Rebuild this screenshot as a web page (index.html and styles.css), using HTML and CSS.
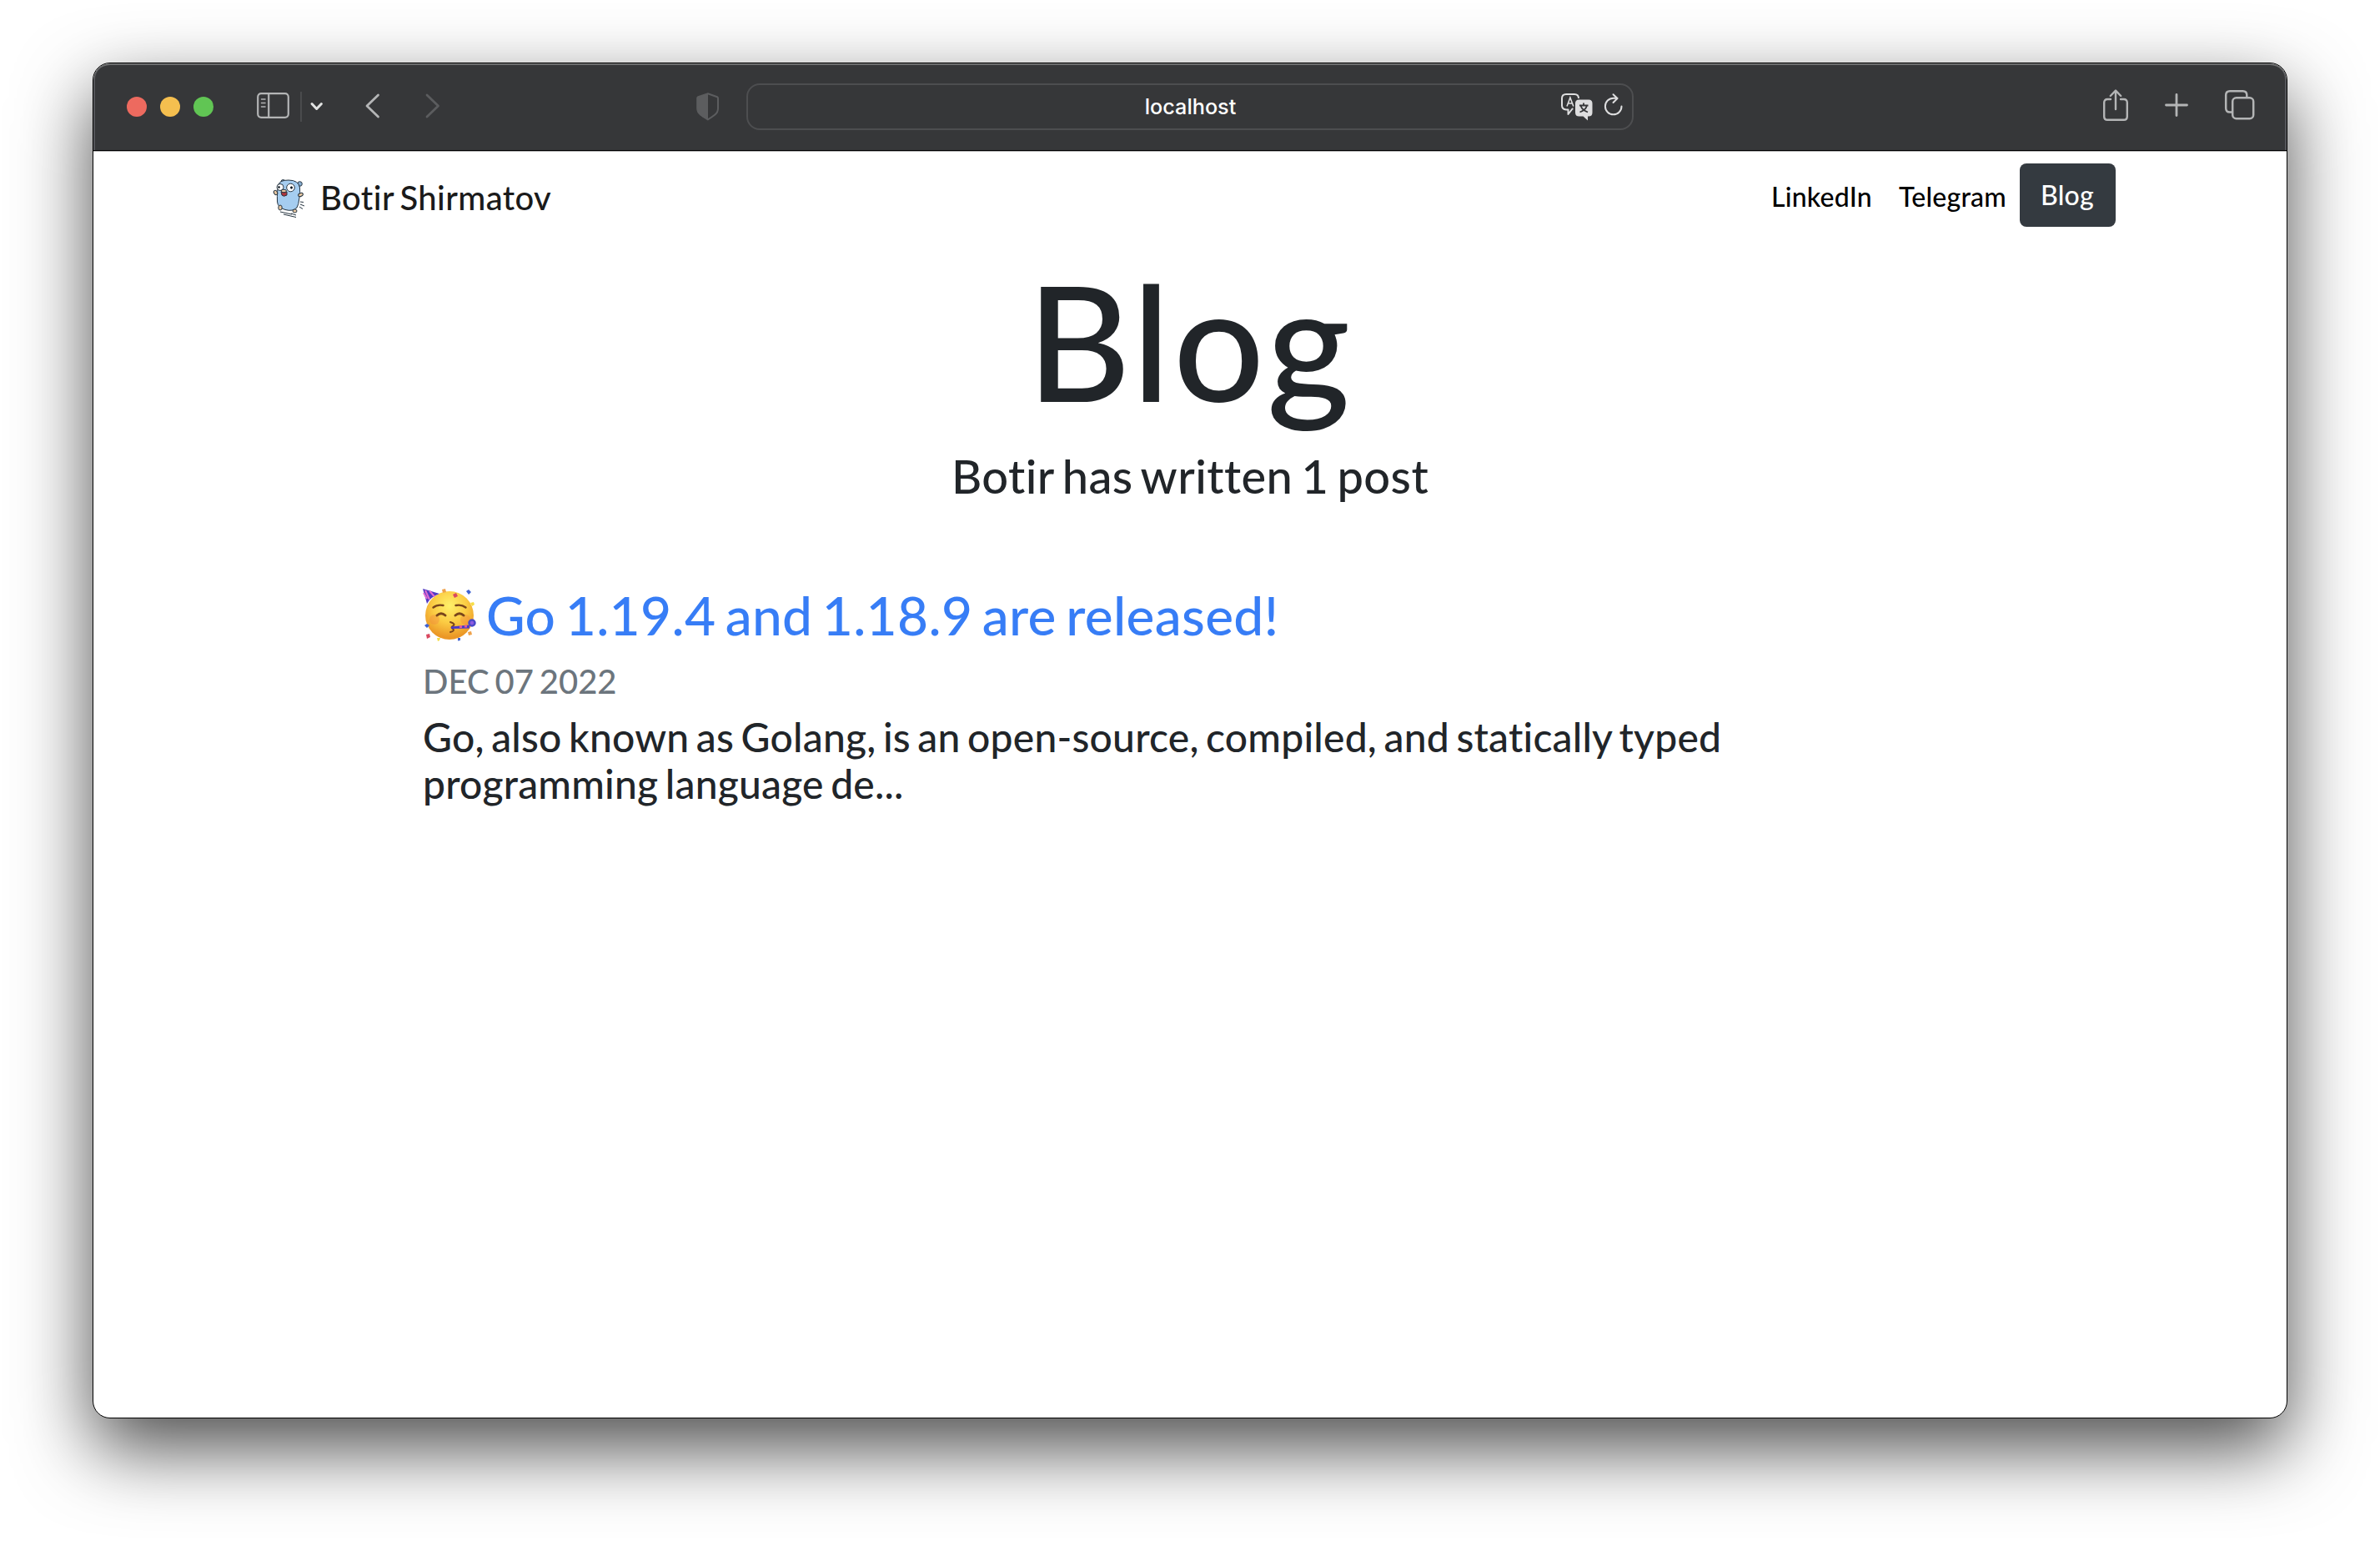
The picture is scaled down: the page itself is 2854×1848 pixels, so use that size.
FILE: index.html
```html
<!DOCTYPE html>
<html lang="en">
<head>
<meta charset="utf-8">
<title>Blog</title>
<link rel="stylesheet" href="styles.css">
</head>
<body>
<div class="window">
  <header class="toolbar">
    <div class="lights"><span class="light red"></span><span class="light yellow"></span><span class="light green"></span></div>
    <svg class="sidebar-icon" width="40" height="32" viewBox="0 0 40 32" fill="none" stroke="#b4b5b6" stroke-width="2.2"><rect x="1.2" y="1.2" width="36.6" height="28.6" rx="4"/><path d="M14.2 1v29"/><path d="M5.500 8h4.500M5.500 12.500h4.500M5.500 17h4.500" stroke-width="1.500" stroke-linecap="round"/></svg>
    <span class="divider"></span>
    <svg class="chevron" width="16" height="12" viewBox="0 0 16 12" fill="none" stroke="#e2e3e3" stroke-width="3" stroke-linecap="round" stroke-linejoin="round"><path d="M2 2.500l5.700 6 5.700-6"/></svg>
    <svg class="back" width="18" height="30" viewBox="0 0 18 30" fill="none" stroke="#b4b5b6" stroke-width="2.800" stroke-linecap="round" stroke-linejoin="round"><path d="M15.500 2L2 15l13.500 13"/></svg>
    <svg class="forward" width="18" height="30" viewBox="0 0 18 30" fill="none" stroke="#5b5c5e" stroke-width="2.800" stroke-linecap="round" stroke-linejoin="round"><path d="M2 2l13.500 13L2 28"/></svg>
    <svg class="shield" width="28" height="34" viewBox="0 0 28 34"><path d="M13.800 1.200L25 5.200q1 .400 1 1.600V19q0 4.500-3.600 7.600-3.600 3-8.600 5.700-5-2.700-8.600-5.700Q1.200 23.500 1.200 19V6.800q0-1.200 1-1.600z" fill="none" stroke="#5c5d5f" stroke-width="2"/><path d="M14 1L1 5.700V19q0 9 13 13.500z" fill="#5c5d5f"/></svg>
    <div class="address">
      <span class="host">localhost</span>
      <div class="address-tools">
        <svg width="38" height="29" viewBox="0 0 38 29"><path d="M14.500 18.500h-1L8.500 25v-5.500H6q-5-.500-5-5V6q0-5 5-5h10q5 0 5 5" fill="none" stroke="#dededf" stroke-width="2" stroke-linejoin="round"/><path d="M7 15.500L10.900 5l3.900 10.500M8.400 12h5" fill="none" stroke="#dededf" stroke-width="1.600"/><path d="M21.500 7.500H33q4.500 0 4.500 4.500v11q0 4.500-4.500 4.500h-1V32.500l-5.500-5h-5Q17 27.500 17 23v-11q0-4.500 4.500-4.500z" fill="#dededf"/><path d="M22 14.500h10.500M27 11.500v3M23.500 14.500q1.500 5.500 8.500 8M31 14.500q-1.500 5.500-8.500 8" fill="none" stroke="#363739" stroke-width="1.800"/></svg>
        <svg width="24" height="28" viewBox="0 0 24 28" fill="none" stroke="#dededf" stroke-width="2" stroke-linecap="round" stroke-linejoin="round"><path d="M21.500 15.500A9.800 9.800 0 1 1 11.700 5.700h4.800M11.500 1.200l5 4.800-5 5"/></svg>
      </div>
    </div>
    <div class="actions">
      <svg width="30" height="38" viewBox="0 0 30 38" fill="none" stroke="#b4b5b6" stroke-width="2.400" stroke-linecap="round" stroke-linejoin="round"><path d="M9 12H5.200q-4 0-4 4v16.800q0 4 4 4h19.600q4 0 4-4V16q0-4-4-4H21M15 24V2M8.800 8L15 1.500 21.200 8"/></svg>
      <svg class="plus" width="28" height="28" viewBox="0 0 28 28" stroke="#b4b5b6" stroke-width="2.800" stroke-linecap="round"><path d="M14 1.500v25M1.500 14h25"/></svg>
      <svg class="tabs" width="36" height="36" viewBox="0 0 36 36" fill="none" stroke="#b4b5b6" stroke-width="2.500"><rect x="9.200" y="9.200" width="25" height="25" rx="4.500"/><path d="M9.200 26.500H6q-4.800 0-4.800-4.800V6q0-4.800 4.800-4.800h15.500q4.800 0 4.800 4.800v3.200"/></svg>
    </div>
  </header>
  <nav class="navbar">
    <a class="brand">
      <svg class="gopher" width="40" height="50" viewBox="0 0 40 50" stroke="#263440" stroke-width="1"><circle cx="12.500" cy="6" r="2.500" fill="#86acd0"/><circle cx="32.500" cy="8.500" r="2.800" fill="#86acd0"/><path d="M7 9Q9 4 19 4q12 0 13.500 9 .500 5-.500 12-1 9-3 12-5 5-14 2.500Q6 37 5.500 30 5 16 7 9z" fill="#a5cdf0"/><g fill="#e9c9a3"><ellipse cx="3.500" cy="19" rx="2" ry="2.800" transform="rotate(-30 3.500 19)"/><ellipse cx="33.500" cy="21.500" rx="3" ry="2" transform="rotate(-25 33.500 21.500)"/><ellipse cx="9" cy="37" rx="2.200" ry="3"/><ellipse cx="26.500" cy="41" rx="2.500" ry="2"/></g><circle cx="9" cy="12.500" r="4" fill="#fff"/><circle cx="21.500" cy="13" r="4.800" fill="#fff"/><circle cx="7.500" cy="12.500" r="1" fill="#111"/><circle cx="22.500" cy="13" r="1.200" fill="#111"/><path d="M10 18q4 2 7 0v4q-4 2.500-6 0z" fill="#b3343c"/><ellipse cx="13.300" cy="17" rx="3.200" ry="1.700" fill="#e9c9a3"/><path d="M33 30l4 .500M33 33l5 2M32 36l4 2.500M9 42l14 3M13 45l15 3.500M22 44l6 2" fill="none"/></svg>
      <span>Botir Shirmatov</span>
    </a>
    <div class="links"><a>LinkedIn</a><a>Telegram</a><a class="active">Blog</a></div>
  </nav>
  <main>
    <h1>Blog</h1>
    <p class="lead">Botir has written 1 post</p>
    <article>
      <h2><svg class="party" width="66" height="66" viewBox="0 0 66 66">
        <defs><radialGradient id="face" cx=".5" cy=".3" r=".65"><stop offset="0" stop-color="#fff16a"/><stop offset=".55" stop-color="#fbcb43"/><stop offset="1" stop-color="#eb9726"/></radialGradient></defs>
        <circle cx="32" cy="33" r="29" fill="url(#face)"/>
        <circle cx="14" cy="38" r="6" fill="#f18440" opacity=".35"/><circle cx="51" cy="38" r="6" fill="#f18440" opacity=".35"/>
        <path d="M0 1l20 6Q9 11 5 19z" fill="#523bc4"/><path d="M3 3l5 11M8 3.500l6 7M1 6l4 7" stroke="#e26bd0" stroke-width="2"/>
        <g fill="none" stroke="#79451b" stroke-width="2.400" stroke-linecap="round"><path d="M12.500 23.500q5-4 12-2.500M39.500 21q7-1.500 12 2.500"/><path d="M17 33q5-4.500 10 0M39 33q5-4.500 10 0" stroke-width="3"/><path d="M33 41q7 2 3 5-3 1.500 0 3 3 2.500-3 4" stroke-width="2"/></g>
        <path d="M34 46.500l22-2v4l-22 .500z" fill="#4b3ac8"/><path d="M44 46.500h3M50 46h3" stroke="#e05b9f" stroke-width="3"/><circle cx="59" cy="42" r="3.500" fill="#8e5ce0" stroke="#4a48c8" stroke-width="2.500"/>
        <g fill="#d94860"><path d="M36 8l4-2 2 4-4 2zM4 56l4-1 1 4-4 2z"/></g><g fill="#3f62d2"><path d="M52 4l3-2 3 3-3 3zM2 45l3-2 3 2-3 3zM42 60h3v3l-3 .500z"/></g><g fill="#efa24b"><path d="M23 2l4-1 1 4-4 1zM54 53l4-1 1 4-4 1z"/></g><g fill="#f6dd45"><path d="M57 18l4-1 1 3-3 2zM17 60l4 0-1 3-2 1z"/></g>
      </svg><a>Go 1.19.4 and 1.18.9 are released!</a></h2>
      <p class="date">DEC 07 2022</p>
      <p class="excerpt">Go, also known as Golang, is an open-source, compiled, and statically typed programming language de...</p>
    </article>
  </main>
</div>
</body>
</html>
```
FILE: styles.css
```css
* { box-sizing: border-box; }
body {
  margin: 0;
  height: 1848px;
  padding: 75px 111px 0;
  overflow: hidden;
  background: #fff;
  color: #212529;
  font-family: Lato, sans-serif;
  font-weight: 500;
  font-variant-ligatures: none;
}
svg { display: block; flex: none; overflow: visible; }
h1, h2, p { margin: 0; font-weight: 500; }
h2, p, .brand { word-spacing: -.08em; }
.window {
  width: 2632px;
  height: 1626px;
  border: 1px solid #000;
  border-radius: 21px;
  background: #fff;
  overflow: hidden;
  box-shadow: 0 36px 90px rgba(0, 0, 0, .7);
}
.toolbar {
  display: flex;
  align-items: center;
  height: 105px;
  background: #363739;
  border-bottom: 1px solid #000;
  border-radius: 20px 20px 0 0;
  box-shadow: inset 0 2px 0 #6d6e6f, inset 2px 0 0 #55565a, inset -2px 0 0 #55565a, 0 1px 0 #b5b5b5;
}
.lights { display: flex; gap: 16px; margin-left: 40px; }
.light { width: 24px; height: 24px; border-radius: 50%; }
.red { background: #ed6a5f; }
.yellow { background: #f5bf4f; }
.green { background: #61c554; }
.sidebar-icon { margin: -2px 0 0 52px; }
.divider { width: 2px; height: 36px; margin-left: 12px; background: #4a4b4d; }
.chevron { margin-left: 10px; }
.back { margin: -2px 0 0 50px; }
.forward { margin: -2px 0 0 54px; }
.shield { margin-left: 307px; }
.address {
  display: grid;
  grid-template-columns: 1fr auto 1fr;
  align-items: center;
  width: 1064px;
  height: 56px;
  margin-left: 32px;
  border: 2px solid #4d4e50;
  border-radius: 16px;
  color: #fff;
  font: 500 25.200px Inter, sans-serif;
}
.host { grid-column: 2; padding-left: 1px; }
.address-tools { display: flex; gap: 13px; justify-content: flex-end; padding-right: 10px; margin-top: -3px; }
.actions { display: flex; align-items: center; margin: -4px 0 0 563px; }
.plus { margin-left: 44px; }
.tabs { margin-left: 44px; }
.navbar {
  display: flex;
  justify-content: space-between;
  align-items: flex-start;
  padding: 15px 205px 0 215px;
}
.brand {
  display: flex;
  align-items: center;
  gap: 17px;
  padding-top: 11px;
  font-size: 40px;
  line-height: 60px;
  letter-spacing: .01em;
  color: #1a1a1a;
}
.links { display: flex; align-items: flex-start; font-size: 32px; line-height: 48px; letter-spacing: .007em; color: #000; }
.links a { padding: 16px 16px 0; }
.links .active { width: 115px; height: 76px; padding: 14px 0 0 25px; border-radius: 8px; background: #343a40; color: #fff; }
h1 { margin-top: 21px; font-size: 192px; line-height: 230px; letter-spacing: .018em; text-align: center; }
.lead { margin-top: 14px; font-size: 56px; line-height: 68px; letter-spacing: .0077em; text-align: center; }
article { width: 1840px; margin: 94px auto 0; }
h2 { display: flex; align-items: center; gap: 10px; font-size: 64px; line-height: 77px; letter-spacing: .005em; color: #377df6; }
.date { margin-top: 17px; font-size: 40px; line-height: 48px; color: #6c757d; }
.excerpt { width: 1640px; margin-top: 15px; font-size: 48px; line-height: 56px; letter-spacing: .0043em; }
```
